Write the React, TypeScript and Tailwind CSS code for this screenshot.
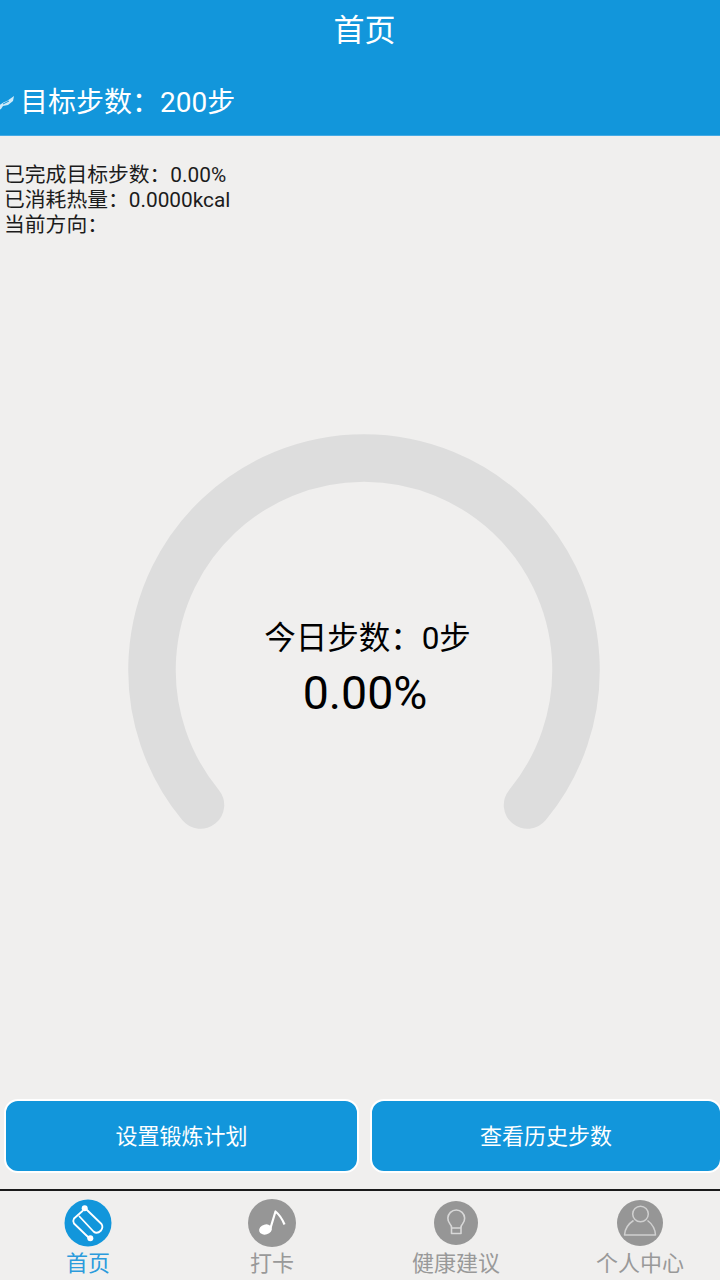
const font = { fontFamily: "Roboto, 'Noto Sans CJK SC', sans-serif" };

function HomeIcon() {
  return (
    <svg width="48" height="48" viewBox="0 0 48 48">
      <circle cx="24" cy="24" r="23.5" fill="#1296db" />
      <g fill="none" stroke="#ffffff" strokeWidth="1.8" strokeLinecap="round" strokeLinejoin="round">
        <path d="M18.5 12 L10 19.5 Q8.5 22 10 24.5 L24 38" />
        <path d="M23 11 L37.5 25 Q39.5 28 37 31.5 Q33 35.5 29.5 32.5 L15.5 17.5" />
      </g>
      <circle cx="20.7" cy="9.3" r="3" fill="#ffffff" />
      <circle cx="26.3" cy="39.3" r="3" fill="#ffffff" />
    </svg>
  );
}

function NoteIcon() {
  return (
    <svg width="48" height="48" viewBox="0 0 48 48">
      <circle cx="24" cy="24" r="24" fill="#969696" />
      <ellipse cx="17.5" cy="30.5" rx="6.5" ry="5" fill="#ffffff" transform="rotate(-15 17.5 30.5)" />
      <path d="M22.5 29 L27.5 12.5 Q33 17 36.5 25.5" fill="none" stroke="#ffffff" strokeWidth="2.2" strokeLinejoin="round" />
    </svg>
  );
}

function BulbIcon() {
  return (
    <svg width="44" height="44" viewBox="0 0 44 44">
      <circle cx="22" cy="22" r="22" fill="#969696" />
      <path
        d="M17.5 27 Q17.5 24.5 16 23 A8.4 8.4 0 1 1 28.5 23 Q27 24.5 27 27 Z M17.5 27 V32.5 H27 V27"
        fill="none"
        stroke="#d8d8d8"
        strokeWidth="1.6"
        strokeLinejoin="round"
      />
    </svg>
  );
}

function PersonIcon() {
  return (
    <svg width="46" height="46" viewBox="0 0 46 46">
      <circle cx="23" cy="23" r="23" fill="#969696" />
      <circle cx="23.5" cy="14" r="7.8" fill="none" stroke="#d0d0d0" strokeWidth="1.5" />
      <path
        d="M16.5 20.5 Q8 26 7.5 35 H38.5 Q38 26 30.5 20.5"
        fill="none"
        stroke="#d0d0d0"
        strokeWidth="1.5"
        strokeLinejoin="round"
      />
    </svg>
  );
}

const tabs = [
  { label: "首页", icon: <HomeIcon />, active: true },
  { label: "打卡", icon: <NoteIcon />, active: false },
  { label: "健康建议", icon: <BulbIcon />, active: false },
  { label: "个人中心", icon: <PersonIcon />, active: false },
];

export default function App() {
  return (
    <div className="relative flex h-[1280px] w-[720px] flex-col overflow-hidden bg-[#f0efee]" style={font}>
      <header className="h-[136px] shrink-0 border-b border-[#45aae4] bg-[#1296db] text-white">
        <h1 className="flex h-[63px] items-center justify-center pl-[9px] text-[31px] font-normal">首页</h1>
        <div className="mt-[15px] flex h-[50px] items-center text-[28px]">
          <svg width="19" height="20" viewBox="0 0 19 20" className="mr-px shrink-0">
            <path d="M-3 14 Q3 9 7 8 L14 3 L13 8 L8 12 L3 13 L1 16 L-3 18 Z" fill="#cfeaf9" />
            <path d="M3 11 L9 8" stroke="#1296db" strokeWidth="1" />
          </svg>
          <span>目标步数：200步</span>
        </div>
      </header>

      <main className="flex flex-1 flex-col">
        <div className="mt-[27px] pl-[4px] text-[20.8px] leading-[25px] text-[#1c1c1c]">
          <p>已完成目标步数：0.00%</p>
          <p>已消耗热量：0.0000kcal</p>
          <p>当前方向：</p>
        </div>

        <div className="relative ml-[128px] mt-[196px] h-[400px] w-[472px]">
          <svg width="472" height="400" viewBox="0 0 472 400">
            <path
              d="M72.5 371 A212 212 0 1 1 399.5 371"
              fill="none"
              stroke="#dddddd"
              strokeWidth="47.5"
              strokeLinecap="round"
            />
          </svg>
          <div className="absolute inset-x-0 top-[183px] flex flex-col items-center text-black">
            <span className="pl-[7px] text-[31.5px] leading-[44px]">今日步数：0步</span>
            <span className="mt-[2px] pl-[2px] text-[46.5px] leading-[60px]">0.00%</span>
          </div>
        </div>

        <div className="mt-auto flex gap-[11px] pl-[4px]">
          <button className="h-[74px] w-[355px] shrink-0 rounded-[14px] border-2 border-white bg-[#1296db] text-[22px] text-white">
            设置锻炼计划
          </button>
          <button className="h-[74px] w-[352px] shrink-0 rounded-[14px] border-2 border-white bg-[#1296db] text-[22px] text-white">
            查看历史步数
          </button>
        </div>
      </main>

      <nav className="mt-[16px] h-[91px] shrink-0 border-t-2 border-[#1a1a1a]">
        <div className="-ml-[4px] grid w-[736px] grid-cols-4 pt-[8px]">
          {tabs.map((tab) => (
            <div key={tab.label} className="flex flex-col items-center">
              <div className="flex h-[48px] items-center justify-center">{tab.icon}</div>
              <span
                className={
                  tab.active
                    ? "mt-[4px] text-[22px] leading-[26px] text-[#2b9bdc]"
                    : "mt-[4px] text-[22px] leading-[26px] text-[#999999]"
                }
              >
                {tab.label}
              </span>
            </div>
          ))}
        </div>
      </nav>
    </div>
  );
}
